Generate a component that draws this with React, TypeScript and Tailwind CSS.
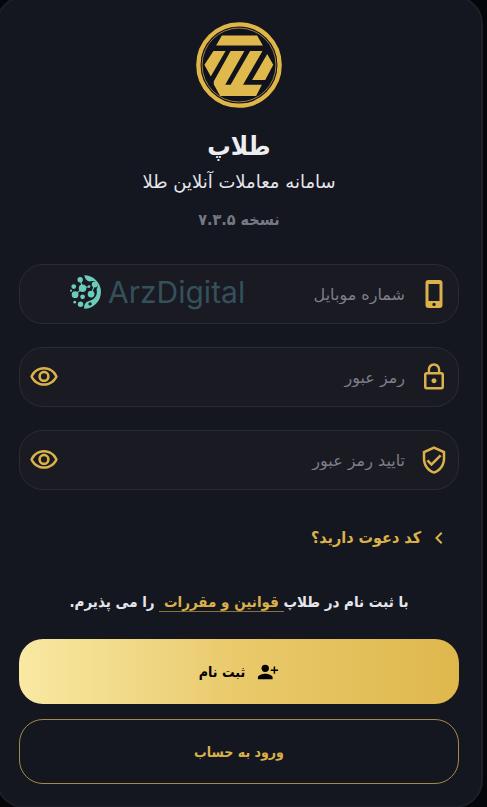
import React, { useState } from 'react'
import { MdChevronLeft, MdLockOutline, MdOutlineVerifiedUser, MdOutlineVisibility } from 'react-icons/md'

interface FieldProps {
  id: string
  label: string
  icon: React.ReactNode
  secret?: boolean
  children?: React.ReactNode
}

const Logo: React.FC = () => (
  <svg viewBox="50 38 256 256" className="size-[86px]" aria-hidden="true">
    <circle cx="178" cy="166" r="121" fill="#10131d" stroke="#dfb647" strokeWidth="13" />
    <circle cx="178" cy="166" r="110" fill="none" stroke="#dfb647" strokeWidth="2" />
    <g fill="#dfb94b">
      <path d="M127 78H232L249 108H110Z" />
      <path d="M102 124H138L94 200L75 165Z" />
      <path d="M153 124H194L137 225H153L211 124H248L190 225H246L229 258H122L103 224V214Z" />
      <path d="M262 133L280 165L256 211H217Z" />
    </g>
  </svg>
)

const PhoneIcon: React.FC = () => (
  <svg viewBox="0 0 30 30" className="size-[30px]" aria-hidden="true">
    <path
      fill="currentColor"
      fillRule="evenodd"
      d="M9.500 1h11a3 3 0 0 1 3 3v22a3 3 0 0 1-3 3h-11a3 3 0 0 1-3-3V4a3 3 0 0 1 3-3ZM9.500 5v17h11V5ZM15 23.700a1.700 1.700 0 1 0 0 3.400a1.700 1.700 0 1 0 0-3.400Z"
    />
  </svg>
)

const PersonAddIcon: React.FC = () => (
  <svg viewBox="0 0 24 24" className="size-[22px]" fill="currentColor" aria-hidden="true">
    <circle cx="9" cy="8" r="4" />
    <path d="M1 18v2h16v-2c0-2.700-5.300-4-8-4s-8 1.300-8 4Z" />
    <path d="M18.200 6h1.600v3.200H23v1.600h-3.200V14h-1.600v-3.200H15V9.200h3.200Z" />
  </svg>
)

const Watermark: React.FC = () => (
  <div dir="ltr" className="pointer-events-none absolute left-[50px] flex items-center gap-1 pb-1">
    <svg viewBox="210 62 100 100" className="size-[34px]" fill="#6bcdb9" aria-hidden="true">
      <path d="M252 63A49 49 0 1 1 252 161C250 150 256 140 268 138C285 134 292 118 288 104C297 92 289 78 274 80C264 83 255 78 252 63Z" />
      <path d="M240 76L247 101L225 120M283 90L272 118M247 101L266 96" fill="none" stroke="#6bcdb9" strokeWidth="3" />
      <circle cx="240" cy="76" r="8" />
      <circle cx="221" cy="96" r="7" />
      <circle cx="213" cy="108" r="3" />
      <circle cx="247" cy="101" r="11" />
      <circle cx="225" cy="120" r="10" />
      <circle cx="247" cy="126" r="7" />
      <circle cx="224" cy="142" r="4" />
      <circle cx="241" cy="148" r="8" />
      <circle cx="283" cy="90" r="9" />
      <circle cx="272" cy="118" r="10" />
      <circle cx="266" cy="96" r="4" />
      <circle cx="269" cy="147" r="5" fill="#191a22" />
    </svg>
    <span className="font-['Inter',sans-serif] text-3xl leading-8 text-[#34505b]">ArzDigital</span>
  </div>
)

const Field: React.FC<FieldProps> = ({ id, label, icon, secret, children }) => {
  const [visible, setVisible] = useState(false)

  return (
    <div className="relative flex h-[60px] items-center rounded-3xl border border-[#2a2c35] bg-[#191a22] px-[9px]">
      <label htmlFor={id} className="shrink-0 text-[#dbb24a]">
        {icon}
      </label>
      <input
        id={id}
        type={secret && !visible ? 'password' : 'text'}
        placeholder={label}
        aria-label={label}
        className="h-full min-w-0 flex-1 bg-transparent px-3.5 text-base text-white outline-none placeholder:text-[#7d7f88]"
      />
      {secret && (
        <button
          type="button"
          aria-label="نمایش رمز"
          onClick={() => setVisible(!visible)}
          className="shrink-0 text-[#dbb24a]"
        >
          <MdOutlineVisibility size={30} />
        </button>
      )}
      {children}
    </div>
  )
}

export default function App() {
  return (
    <div className="min-h-screen overflow-hidden bg-[#050609] font-['DejaVu_Sans',sans-serif]">
      <main
        dir="rtl"
        className="-mt-1 -ml-1 mr-1 rounded-[28px] border-2 border-[#1d1f29] bg-[#141620] pt-6 pr-[22px] pb-[22px] pl-[21px]"
      >
        <header className="flex flex-col items-center">
          <Logo />
          <h1 className="mt-5 font-['DejaVu_Sans_Condensed','DejaVu_Sans',sans-serif] text-[26px] leading-9 font-bold text-[#edeef2]">
            طلاپ
          </h1>
          <p className="mt-1 text-lg text-[#e4e6eb]">سامانه معاملات آنلاین طلا</p>
          <p className="mt-3 font-['DejaVu_Sans_Condensed','DejaVu_Sans',sans-serif] text-base font-bold text-[#777982]">
            نسخه ۷.۳.۵
          </p>
        </header>

        <form
          className="font-['DejaVu_Sans_Condensed','DejaVu_Sans',sans-serif]"
          onSubmit={(e) => e.preventDefault()}
        >
          <div className="mt-8 flex flex-col gap-[23px] font-['DejaVu_Sans',sans-serif]">
            <Field id="mobile" label="شماره موبایل" icon={<PhoneIcon />}>
              <Watermark />
            </Field>
            <Field id="password" label="رمز عبور" icon={<MdLockOutline size={30} />} secret />
            <Field id="confirm" label="تایید رمز عبور" icon={<MdOutlineVerifiedUser size={30} />} secret />
          </div>

          <button type="button" className="mt-9 mr-2 flex items-center gap-1.5 text-base font-bold text-[#dbb24a]">
            <MdChevronLeft size={24} />
            کد دعوت دارید؟
          </button>

          <p className="mt-10 text-center text-[15px] leading-6 font-bold text-[#e4e6eb]">
            با ثبت نام در طلاپ
            <a href="#terms" className="border-b border-[#8a7336] text-[#dbb24a]">
              &nbsp;قوانین و مقررات&nbsp;
            </a>{' '}
            را می پذیرم.
          </p>

          <button
            type="submit"
            className="mt-[25px] flex h-[65px] w-full items-center justify-center gap-3 rounded-3xl bg-linear-to-r from-[#f9e9a3] via-[#e9c96a] to-[#dfb84c] text-sm font-bold text-black"
          >
            <PersonAddIcon />
            ثبت نام
          </button>
          <button
            type="button"
            className="mt-[15px] h-[65px] w-full rounded-3xl border border-[#a58b4a] text-sm font-bold text-[#dbb24a]"
          >
            ورود به حساب
          </button>
        </form>
      </main>
    </div>
  )
}
